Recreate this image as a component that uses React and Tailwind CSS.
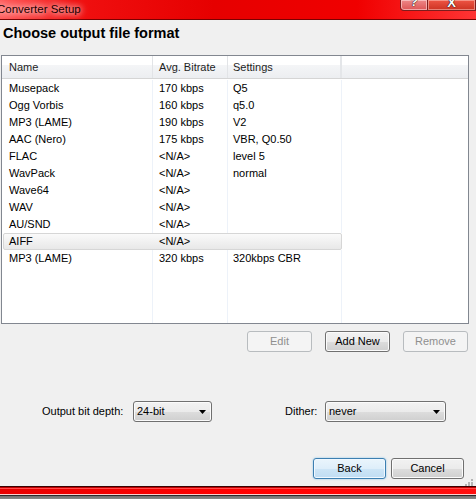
import { useState } from "react";

const formats = [
  { name: "Musepack", bitrate: "170 kbps", settings: "Q5" },
  { name: "Ogg Vorbis", bitrate: "160 kbps", settings: "q5.0" },
  { name: "MP3 (LAME)", bitrate: "190 kbps", settings: "V2" },
  { name: "AAC (Nero)", bitrate: "175 kbps", settings: "VBR, Q0.50" },
  { name: "FLAC", bitrate: "<N/A>", settings: "level 5" },
  { name: "WavPack", bitrate: "<N/A>", settings: "normal" },
  { name: "Wave64", bitrate: "<N/A>", settings: "" },
  { name: "WAV", bitrate: "<N/A>", settings: "" },
  { name: "AU/SND", bitrate: "<N/A>", settings: "" },
  { name: "AIFF", bitrate: "<N/A>", settings: "" },
  { name: "MP3 (LAME)", bitrate: "320 kbps", settings: "320kbps CBR" },
];

const btn =
  "h-[21px] rounded-[3px] border border-[#707070] bg-[linear-gradient(#f2f2f2_0%,#ebebeb_50%,#dddddd_51%,#cfcfcf_100%)] shadow-[inset_0_0_0_1px_#fbfbfb] text-[11px] text-black leading-none";
const btnDisabled =
  "h-[21px] rounded-[3px] border border-[#b8bcbf] bg-[#f4f4f4] text-[11px] text-[#8f8f8f] leading-none";

function Row({ item, selected }) {
  if (selected) {
    return (
      <div className="flex h-[17px]">
        <div className="ml-[1px] flex w-[339px] rounded-[2px] border border-[#d6d6d6] bg-[linear-gradient(#fafafa,#e8e8e8)]">
          <div className="w-[149px] pl-[5px] leading-[15px]">{item.name}</div>
          <div className="w-[75px] pl-[6px] leading-[15px]">{item.bitrate}</div>
          <div className="flex-1 pl-[5px] leading-[15px]">{item.settings}</div>
        </div>
        <div className="flex-1" />
      </div>
    );
  }
  return (
    <div className="flex h-[17px] leading-[17px]">
      <div className="w-[151px] border-r border-[#edf2f9] pl-[7px]">{item.name}</div>
      <div className="w-[75px] border-r border-[#edf2f9] pl-[6px]">{item.bitrate}</div>
      <div className="w-[114px] border-r border-[#edf2f9] pl-[5px]">{item.settings}</div>
      <div className="flex-1" />
    </div>
  );
}

function Select({ value, width }) {
  return (
    <div
      className={`${btn} ${width} flex items-center justify-between pl-[3px] pr-[5px]`}
    >
      <span>{value}</span>
      <svg width="7" height="4" viewBox="0 0 7 4">
        <path d="M0 0h7L3.5 4z" fill="#000" />
      </svg>
    </div>
  );
}

export default function App() {
  const [selected] = useState(9);

  return (
    <div className="flex h-[499px] w-[476px] flex-col overflow-hidden font-['Liberation_Sans',Arial,sans-serif] text-[11px] text-black">
      {/* Title bar */}
      <div className="flex h-[20px] items-start border-b border-[#7a0000] bg-[linear-gradient(90deg,#ff5a5a_0%,#f01010_16%,#e60000_45%,#f00000_75%,#ff3434_100%)]">
        <div className="ml-[-3px] flex-1 pt-[2px] text-[11.5px] leading-[14px] text-[#1a0000] [text-shadow:0_0_6px_#fff,0_0_10px_#fff]">
          Converter Setup
        </div>
        <div className="flex h-[11px]">
          <div className="flex w-[28px] items-end justify-center overflow-hidden rounded-bl-[4px] border border-t-0 border-[#7d1d1d] bg-[linear-gradient(#e88,#d55)] shadow-[inset_0_0_0_1px_rgba(255,220,220,0.6)]">
            <span className="mb-[2px] text-[13px] font-bold leading-[13px] text-white [text-shadow:0_0_1px_#000,0_0_1px_#000]">?</span>
          </div>
          <div className="flex w-[48px] items-end justify-center overflow-hidden border border-t-0 border-l-0 border-[#7d1d1d] bg-[linear-gradient(#e54,#c32)] shadow-[inset_0_0_0_1px_rgba(255,210,200,0.5)]">
            <span className="mb-[1px] text-[13px] font-bold leading-[13px] text-white [text-shadow:0_0_1px_#000,0_0_1px_#000]">X</span>
          </div>
        </div>
      </div>

      {/* Body */}
      <div className="flex flex-1 flex-col bg-[#f0f0f0]">
        <div className="h-[35px] pl-[3px] pt-[4px] text-[14.5px] font-bold leading-[18px]">
          Choose output file format
        </div>

        {/* List */}
        <div className="ml-[1px] flex h-[269px] w-[468px] flex-col border border-[#828790] bg-white">
          <div className="flex h-[23px] border-b border-[#d5d5d5] bg-[linear-gradient(#fff_0%,#fff_40%,#f4f5f7_42%,#eceef1_100%)] leading-[22px] text-[#1e1e1e]">
            <div className="w-[151px] border-r border-[#e2e4e7] pl-[7px]">Name</div>
            <div className="w-[75px] border-r border-[#e2e4e7] pl-[6px]">Avg. Bitrate</div>
            <div className="w-[114px] border-r-2 border-[#e4e6e9] pl-[5px]">Settings</div>
            <div className="flex-1" />
          </div>
          <div className="flex flex-1 flex-col pt-[1px]">
            {formats.map((item, i) => (
              <Row key={i} item={item} selected={i === selected} />
            ))}
            <div className="flex flex-1">
              <div className="w-[151px] border-r border-[#edf2f9]" />
              <div className="w-[75px] border-r border-[#edf2f9]" />
              <div className="w-[114px] border-r border-[#edf2f9]" />
            </div>
          </div>
        </div>

        {/* List buttons */}
        <div className="mt-[7px] flex h-[21px] pl-[247px]">
          <button className={`${btnDisabled} w-[65px]`}>Edit</button>
          <button className={`${btn} ml-[13px] w-[65px]`}>Add New</button>
          <button className={`${btnDisabled} ml-[13px] w-[65px]`}>Remove</button>
        </div>

        {/* Options */}
        <div className="mt-[49px] flex h-[21px] items-center">
          <span className="ml-[42px] w-[91px]">Output bit depth:</span>
          <Select value="24-bit" width="w-[79px]" />
          <span className="ml-[73px] w-[40px]">Dither:</span>
          <Select value="never" width="w-[121px]" />
        </div>

        {/* Dialog buttons */}
        <div className="mt-[36px] flex h-[21px] pl-[313px]">
          <button className="h-[21px] w-[73px] rounded-[3px] border border-[#3c7fb1] bg-[linear-gradient(#eaf5fc_0%,#deeefa_50%,#cde5f6_51%,#c0ddf3_100%)] text-[11px] leading-none shadow-[inset_0_0_0_1px_#f0f8ff,0_0_2px_#7fbfe8]">
            Back
          </button>
          <button className={`${btn} ml-[5px] w-[73px]`}>Cancel</button>
        </div>

        <div className="flex h-[7px] justify-end pr-[2px]">
          <svg width="9" height="7" viewBox="0 0 9 7">
            <g fill="#b4b4b4">
              <rect x="6" y="0" width="2" height="2" />
              <rect x="3" y="3" width="2" height="2" />
              <rect x="6" y="3" width="2" height="2" />
              <rect x="0" y="5" width="2" height="2" />
              <rect x="3" y="5" width="2" height="2" />
              <rect x="6" y="5" width="2" height="2" />
            </g>
          </svg>
        </div>
      </div>

      {/* Bottom frame */}
      <div className="flex h-[13px] flex-col">
        <div className="h-[1px] bg-[#3a0000]" />
        <div className="h-[1px] bg-[#c00000]" />
        <div className="h-[1px] bg-[#ff4a4a]" />
        <div className="h-[5px] bg-[linear-gradient(90deg,#e80000,#ff0000_50%,#ff1010)]" />
        <div className="h-[1px] bg-[#ffd0d0]" />
        <div className="h-[1px] bg-[#2a2a2a]" />
        <div className="flex-1 bg-[linear-gradient(#707070,#8a8a8a)]" />
      </div>
    </div>
  );
}
